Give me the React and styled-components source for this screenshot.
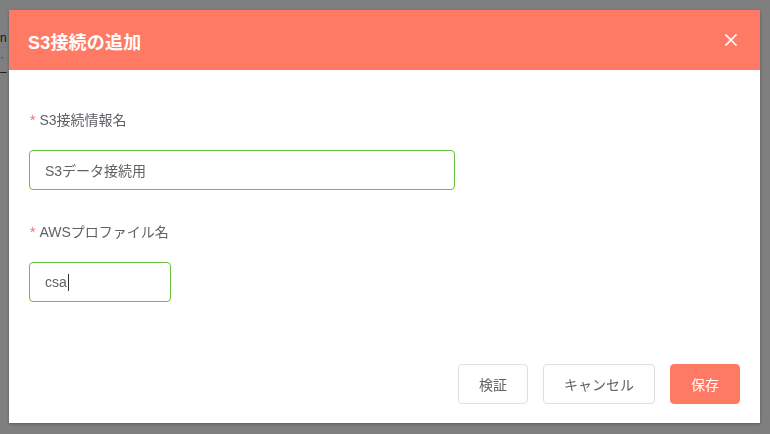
import React from "react";
import styled, { createGlobalStyle } from "styled-components";

const Global = createGlobalStyle`
  html, body { margin: 0; padding: 0; }
  body {
    width: 770px; height: 434px; overflow: hidden; background: #fff;
    font-family: "Liberation Sans", "Noto Sans CJK JP", sans-serif;
  }
`;

const Page = styled.div`
  width: 770px; height: 434px;
  padding: 32px 0 0 0;
  box-sizing: border-box;
  display: flex; flex-direction: column; gap: 3px;
`;
const PageText = styled.div`
  font-size: 12px; line-height: 12px; width: 8px; overflow: hidden;
  color: ${p => p.$c || "#303133"};
`;
const PageRule = styled.div`
  height: 1px; background: #ebeef5; width: 9px;
`;

const Overlay = styled.div`
  position: fixed; inset: 0;
  background: rgba(0, 0, 0, 0.5);
  display: flex; align-items: flex-start; justify-content: flex-start;
  padding: 10px 0 0 9px;
  box-sizing: border-box;
`;

const Dialog = styled.div`
  width: 751px; height: 413px;
  background: #fff;
  display: flex; flex-direction: column;
  box-shadow: 0 1px 3px rgba(0, 0, 0, 0.3);
`;

const Header = styled.div`
  height: 60px;
  background: #ff7a64;
  display: flex; align-items: center; justify-content: space-between;
  padding: 0 22px 0 19px;
  box-sizing: border-box;
`;
const Title = styled.div`
  color: #fff; font-size: 18px; font-weight: 700; letter-spacing: 0.2px;
  margin-top: 1px;
`;
const Close = styled.button`
  border: 0; background: transparent; padding: 0; cursor: pointer;
  width: 14px; height: 14px; display: flex; align-items: center; justify-content: center;
`;

const Body = styled.div`
  flex: 1;
  padding: 30px 20px 0 20px;
  display: flex; flex-direction: column;
`;
const FormItem = styled.div`
  display: flex; flex-direction: column;
  margin-bottom: 22px;
`;
const Label = styled.label`
  font-size: 14px; line-height: 40px; height: 40px;
  color: #606266;
  margin-bottom: 10px;
  &::before { content: "*"; color: #f56c6c; margin-right: 4px; margin-left: 1px; }
`;
const Field = styled.div`
  width: ${p => p.$w}px; height: 40px;
  box-sizing: border-box;
  border: 1px solid #67c23a;
  border-radius: 4px;
  padding: 0 15px;
  display: flex; align-items: center;
  font-size: 14px; color: #606266;
`;
const Caret = styled.span`
  display: inline-block; width: 1px; height: 17px; background: #303133; margin-left: 1px;
`;

const Footer = styled.div`
  display: flex; justify-content: flex-end; gap: 15px;
  padding: 0 20px 19px 20px;
`;
const Button = styled.button`
  height: 40px; box-sizing: border-box;
  padding: 0 20px;
  font-family: inherit; font-size: 14px;
  border-radius: 4px;
  border: 1px solid ${p => (p.$primary ? "#ff7a64" : "#dcdfe6")};
  background: ${p => (p.$primary ? "#ff7a64" : "#fff")};
  color: ${p => (p.$primary ? "#fff" : "#606266")};
  min-width: ${p => p.$min || 0}px;
`;

export default function App() {
  return (
    <>
      <Global />
      <Page>
        <PageText>n</PageText>
        <PageRule />
        <PageText $c="#409eff">·</PageText>
        <PageText>–</PageText>
      </Page>
      <Overlay>
        <Dialog>
          <Header>
            <Title>S3接続の追加</Title>
            <Close aria-label="close">
              <svg width="12" height="12" viewBox="0 0 12 12">
                <path d="M1 1 L11 11 M11 1 L1 11" stroke="#fff" strokeWidth="1.6" strokeLinecap="square" />
              </svg>
            </Close>
          </Header>
          <Body>
            <FormItem>
              <Label>S3接続情報名</Label>
              <Field $w={426}>S3データ接続用</Field>
            </FormItem>
            <FormItem>
              <Label>AWSプロファイル名</Label>
              <Field $w={142}>csa<Caret /></Field>
            </FormItem>
          </Body>
          <Footer>
            <Button>検証</Button>
            <Button $min={111}>キャンセル</Button>
            <Button $primary $min={70}>保存</Button>
          </Footer>
        </Dialog>
      </Overlay>
    </>
  );
}
